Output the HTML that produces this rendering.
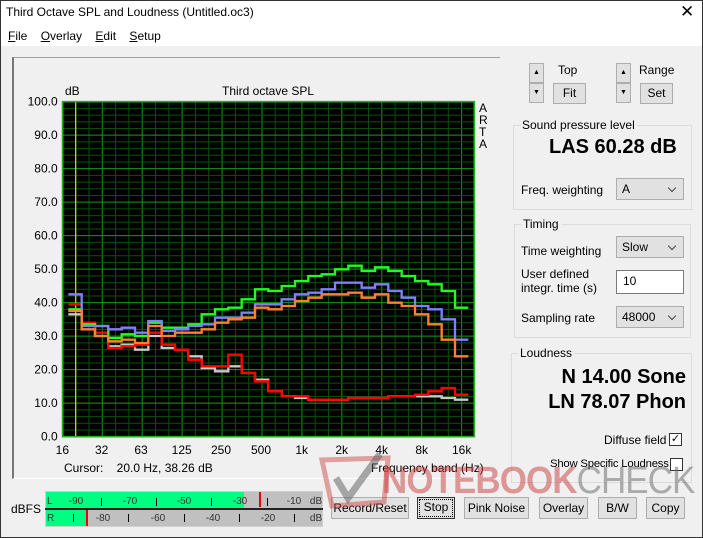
<!DOCTYPE html>
<html><head><meta charset="utf-8"><style>
*{margin:0;padding:0;box-sizing:border-box}
body{width:703px;height:538px;overflow:hidden;background:#f0f0f0;font-family:"Liberation Sans",sans-serif;font-size:12px;color:#000;position:relative}
.a{position:absolute;white-space:nowrap}
.btn{position:absolute;background:#e1e1e1;border:1px solid #adadad;text-align:center;font-size:12px}
.grp{position:absolute;border:1px solid #dcdcdc}
.gt{position:absolute;background:#f0f0f0;padding:0 2px;top:-8px;left:6px;font-size:12px}
.dd{position:absolute;background:#e1e1e1;border:1px solid #adadad;height:22px;padding:3px 5px;font-size:12px}
.dd:after{content:"";position:absolute;right:8px;top:6px;width:5px;height:5px;border-right:1px solid #444;border-bottom:1px solid #444;transform:rotate(45deg)}
.ml{position:absolute;font-size:10px;color:#333;transform:translateX(-50%)}
.tk{position:absolute;width:1px;height:8px;background:#000}
</style></head><body>
<div class="a" style="left:0;top:0;width:703px;height:46px;background:#fff"></div>
<div class="a" style="left:0;top:0;width:703px;height:538px;border:1px solid #333"></div>
<div class="a" style="left:6px;top:5px;font-size:12px">Third Octave SPL and Loudness (Untitled.oc3)</div>
<div class="a" style="left:680px;top:2px;font-size:17px;font-weight:lighter">&#x2715;</div>
<div class="a" style="left:8px;top:29px"><u>F</u>ile&nbsp;&nbsp;&nbsp; <u>O</u>verlay&nbsp;&nbsp;&nbsp; <u>E</u>dit&nbsp;&nbsp;&nbsp; <u>S</u>etup</div>

<div class="a" style="left:12px;top:57px;width:488px;height:422px;border-top:1px solid #a0a0a0;border-left:2px solid #777;border-bottom:1px solid #fff"></div>
<div class="a" style="left:65px;top:84px">dB</div>
<div class="a" style="left:222px;top:84px">Third octave SPL</div>
<div class="a" style="left:479px;top:102px;line-height:12px;font-size:12px">A<br>R<br>T<br>A</div>
<div class="a" style="left:64px;top:461px">Cursor:&nbsp;&nbsp;&nbsp; 20.0 Hz, 38.26 dB</div>
<div class="a" style="left:371px;top:461px">Frequency band (Hz)</div>

<svg class="a" style="left:0;top:50px" width="500" height="430" viewBox="0 0 1500 1290">
<g id="grid"></g>
<rect x="188" y="155" width="1235" height="1005" fill="none" stroke="#20b020" stroke-width="5"/>
<line x1="227" y1="157" x2="227" y2="1158" stroke="#d8c800" stroke-width="4"/>
<g fill="none" stroke-width="7">
<path stroke="#c8c8c8" d="M205 793 H245 V823 H285 V858 H325 V889 H365 V884 H405 V899 H445 V858 H485 V894 H525 V899 H565 V919 H605 V954 H645 V964 H685 V949 H725 V969 H765 V989 H805 V1024 H845 V1039 H885 V1044 H925 V1049 H965 V1049 H1005 V1049 H1045 V1044 H1085 V1044 H1125 V1044 H1165 V1039 H1205 V1039 H1245 V1039 H1285 V1039 H1325 V1044 H1365 V1049 H1405"/>
<path stroke="#ff0000" d="M205 763 H245 V818 H285 V848 H325 V894 H365 V889 H405 V884 H445 V848 H485 V884 H525 V899 H565 V929 H605 V949 H645 V949 H685 V914 H725 V969 H765 V994 H805 V1024 H845 V1039 H885 V1039 H925 V1049 H965 V1049 H1005 V1049 H1045 V1044 H1085 V1044 H1125 V1044 H1165 V1039 H1205 V1039 H1245 V1034 H1285 V1024 H1325 V1014 H1365 V1034 H1405"/>
<path stroke="#20ff20" d="M205 778 H245 V823 H285 V828 H325 V864 H365 V853 H405 V858 H445 V818 H485 V833 H525 V833 H565 V823 H605 V793 H645 V778 H685 V773 H725 V748 H765 V718 H805 V723 H845 V708 H885 V693 H925 V678 H965 V673 H1005 V658 H1045 V647 H1085 V663 H1125 V652 H1165 V663 H1205 V678 H1245 V693 H1285 V703 H1325 V723 H1365 V773 H1405"/>
<path stroke="#8080ff" d="M205 733 H245 V828 H285 V828 H325 V838 H365 V833 H405 V848 H445 V813 H485 V843 H525 V838 H565 V828 H605 V823 H645 V803 H685 V803 H725 V788 H765 V763 H805 V763 H845 V748 H885 V733 H925 V728 H965 V718 H1005 V698 H1045 V698 H1085 V713 H1125 V703 H1165 V723 H1205 V743 H1245 V768 H1285 V778 H1325 V808 H1365 V869 H1405"/>
<path stroke="#ff8030" d="M205 783 H245 V838 H285 V858 H325 V874 H365 V869 H405 V879 H445 V828 H485 V858 H525 V848 H565 V848 H605 V838 H645 V818 H685 V808 H725 V803 H765 V773 H805 V778 H845 V768 H885 V753 H925 V743 H965 V733 H1005 V733 H1045 V728 H1085 V743 H1125 V733 H1165 V758 H1205 V768 H1245 V793 H1285 V823 H1325 V869 H1365 V919 H1405"/>
</g>
<g font-family="Liberation Sans, sans-serif" font-size="36" text-anchor="end" id="yl"></g>
<g font-family="Liberation Sans, sans-serif" font-size="36" text-anchor="middle">
<text x="187" y="1212">16</text><text x="305" y="1212">32</text><text x="423" y="1212">63</text><text x="545" y="1212">125</text><text x="663" y="1212">250</text><text x="783" y="1212">500</text><text x="905" y="1212">1k</text><text x="1025" y="1212">2k</text><text x="1145" y="1212">4k</text><text x="1265" y="1212">8k</text><text x="1385" y="1212">16k</text>
</g>
</svg>
<script>
(function(){var g=document.getElementById('grid'),s='<rect x="188" y="155" width="1235" height="1005" fill="#000"/>';
for(var i=0;i<=31;i++){var x=187+i*39.93;if(x>1423)break;var maj=(i%3==0);s+='<line x1="'+x+'" y1="155" x2="'+x+'" y2="1160" stroke="'+(maj?'#159a15':'#0a4f0a')+'" stroke-width="3"/>';}
for(var j=0;j<=50;j++){var y=1160-j*20.1;var maj=(j%5==0);s+='<line x1="188" y1="'+y+'" x2="1423" y2="'+y+'" stroke="'+(maj?'#159a15':'#0a4f0a')+'" stroke-width="3"/>';}
g.innerHTML=s;var t='';for(var k=0;k<=10;k++){t+='<text x="173" y="'+(1172-k*100.5)+'">'+(k*10)+'.0</text>';}
document.getElementById('yl').innerHTML=t;})();
</script>

<!-- right controls -->
<div class="btn" style="left:529px;top:63px;width:15px;height:20px;font-size:7px;line-height:18px">&#9650;</div>
<div class="btn" style="left:529px;top:83px;width:15px;height:20px;font-size:7px;line-height:18px">&#9660;</div>
<div class="a" style="left:558px;top:63px">Top</div>
<div class="btn" style="left:553px;top:83px;width:33px;height:21px;line-height:19px">Fit</div>
<div class="btn" style="left:616px;top:63px;width:15px;height:20px;font-size:7px;line-height:18px">&#9650;</div>
<div class="btn" style="left:616px;top:83px;width:15px;height:20px;font-size:7px;line-height:18px">&#9660;</div>
<div class="a" style="left:639px;top:63px">Range</div>
<div class="btn" style="left:640px;top:83px;width:33px;height:21px;line-height:19px">Set</div>

<div class="grp" style="left:513px;top:125px;width:179px;height:85px"><span class="gt">Sound pressure level</span></div>
<div class="a" style="left:549px;top:136px;font-size:20px;font-weight:bold">LAS 60.28 dB</div>
<div class="a" style="left:521px;top:183px">Freq. weighting</div>
<div class="dd" style="left:616px;top:178px;width:68px">A</div>

<div class="grp" style="left:514px;top:224px;width:177px;height:114px"><span class="gt">Timing</span></div>
<div class="a" style="left:521px;top:244px">Time weighting</div>
<div class="dd" style="left:616px;top:236px;width:68px">Slow</div>
<div class="a" style="left:521px;top:267px;line-height:14px">User defined<br>integr. time (s)</div>
<div class="a" style="left:616px;top:270px;width:68px;height:24px;background:#fff;border:1px solid #7a7a7a;padding:3px 6px">10</div>
<div class="a" style="left:521px;top:311px">Sampling rate</div>
<div class="dd" style="left:616px;top:306px;width:68px">48000</div>

<div class="grp" style="left:511px;top:353px;width:181px;height:130px"><span class="gt">Loudness</span></div>
<div class="a" style="right:17px;top:366px;font-size:20px;font-weight:bold">N 14.00 Sone</div>
<div class="a" style="right:17px;top:391px;font-size:20px;font-weight:bold">LN 78.07 Phon</div>
<div class="a" style="left:604px;top:433px">Diffuse field</div>
<div class="a" style="left:669px;top:433px;width:13px;height:13px;border:1px solid #333;background:#fff;font-size:11px;line-height:11px;text-align:center">&#10003;</div>
<div class="a" style="left:550px;top:458px;font-size:11.3px;letter-spacing:-0.2px">Show Specific Loudness</div>
<div class="a" style="left:670px;top:458px;width:13px;height:13px;border:1px solid #333;background:#fff"></div>

<!-- meter -->
<div class="a" style="left:11px;top:502px">dBFS</div>
<div class="a" style="left:45px;top:491px;width:278px;height:36px;background:#c0c0c0;border:1px solid #d0d0d0"></div>
<div class="a" style="left:46px;top:492px;width:198px;height:16px;background:#00ff80"></div>
<div class="a" style="left:46px;top:510px;width:41px;height:16px;background:#00ff80"></div>
<div class="a" style="left:45px;top:508px;width:278px;height:2px;background:#222"></div>
<div class="a" style="left:259px;top:492px;width:2px;height:15px;background:#e00"></div>
<div class="a" style="left:86px;top:510px;width:2px;height:16px;background:#e00"></div>
<div class="a" style="left:47px;top:496px;font-size:10px;color:#333">L</div>
<div class="a" style="left:47px;top:513px;font-size:10px;color:#333">R</div>
<div class="ml" style="left:76px;top:496px">-90</div><div class="ml" style="left:130px;top:496px">-70</div><div class="ml" style="left:184px;top:496px">-50</div><div class="ml" style="left:240px;top:496px">-30</div><div class="ml" style="left:294px;top:496px">-10</div><div class="ml" style="left:316px;top:496px">dB</div>
<div class="ml" style="left:103px;top:513px">-80</div><div class="ml" style="left:158px;top:513px">-60</div><div class="ml" style="left:213px;top:513px">-40</div><div class="ml" style="left:268px;top:513px">-20</div><div class="ml" style="left:316px;top:513px">dB</div>
<div class="tk" style="left:101px;top:498px"></div><div class="tk" style="left:156px;top:498px"></div><div class="tk" style="left:211px;top:498px"></div><div class="tk" style="left:267px;top:498px"></div>
<div class="tk" style="left:73px;top:514px"></div><div class="tk" style="left:128px;top:514px"></div><div class="tk" style="left:184px;top:514px"></div><div class="tk" style="left:239px;top:514px"></div><div class="tk" style="left:294px;top:514px"></div>

<div class="btn" style="left:331px;top:497px;width:78px;height:22px;line-height:20px">Record/Reset</div>
<div class="btn" style="left:417px;top:497px;width:38px;height:22px;line-height:18px;border:1px solid #333;outline:1px dotted #000;outline-offset:-3px">Stop</div>
<div class="btn" style="left:464px;top:497px;width:65px;height:22px;line-height:20px">Pink Noise</div>
<div class="btn" style="left:539px;top:497px;width:49px;height:22px;line-height:20px">Overlay</div>
<div class="btn" style="left:598px;top:497px;width:39px;height:22px;line-height:20px">B/W</div>
<div class="btn" style="left:646px;top:497px;width:39px;height:22px;line-height:20px">Copy</div>

<!-- watermark -->
<svg class="a" style="left:318px;top:450px" width="80" height="62" viewBox="0 0 80 62"><path d="M4 10 L70 8 L66 52 L14 56 Z" fill="none" stroke="rgba(200,60,60,0.45)" stroke-width="5"/><path d="M18 28 L30 48 L62 4" fill="none" stroke="rgba(90,90,90,0.5)" stroke-width="7"/></svg>
<div class="a" style="left:382px;top:460px;font-size:38px;font-weight:bold;color:rgba(200,60,60,0.5);letter-spacing:-1px;transform:scaleX(0.92);transform-origin:left">NOTEBOOK<span style="color:rgba(100,100,100,0.5);font-weight:normal">CHECK</span></div>
</body></html>
